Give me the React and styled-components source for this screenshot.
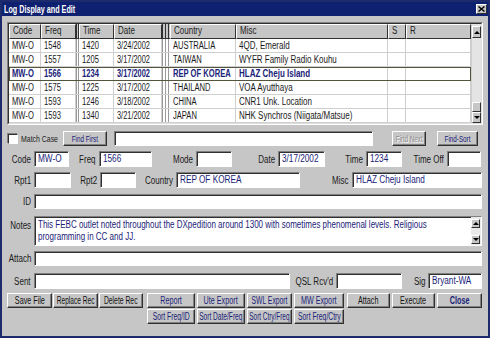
import React from "react";
import styled, { createGlobalStyle } from "styled-components";

const FONT = `"Liberation Sans", Arial, sans-serif`;
const FACE = "#c6c6c6";
const NAVY = "#1a2378";

const GlobalStyle = createGlobalStyle`
  html, body { margin: 0; padding: 0; background: ${FACE}; }
  body { font-family: ${FONT}; font-size: 10px; color: #111; }
  * { box-sizing: border-box; }
`;

const COLS = "32px 35px 3px 35px 48px 8px 66px 152px 18px 65px";

const rows = [
  ["MW-O", "1548", "1420", "3/24/2002", "AUSTRALIA", "4QD, Emerald"],
  ["MW-O", "1557", "1205", "3/17/2002", "TAIWAN", "WYFR Family Radio Kouhu"],
  ["MW-O", "1566", "1234", "3/17/2002", "REP OF KOREA", "HLAZ Cheju Island"],
  ["MW-O", "1575", "1225", "3/17/2002", "THAILAND", "VOA Ayutthaya"],
  ["MW-O", "1593", "1246", "3/18/2002", "CHINA", "CNR1 Unk. Location"],
  ["MW-O", "1593", "1340", "3/21/2002", "JAPAN", "NHK Synchros (Niigata/Matsue)"],
];

// the screenshot's type is squeezed sideways, so text is narrowed with scaleX
const Lbl = ({ w, pt, children }) => (
  <Label $w={w} $pt={pt}>
    <Txt $sx={0.8} $origin="right">{children}</Txt>
  </Label>
);

const Field = ({ children, ...props }) => (
  <Input {...props}>{children ? <Txt $sx={0.82}>{children}</Txt> : null}</Input>
);

const Btn = ({ children, sx, ...props }) => (
  <Button {...props}>
    <Txt $sx={sx || (props.$small ? 0.7 : 0.72)} $origin="center">{children}</Txt>
  </Button>
);

function App() {
  return (
    <>
      <GlobalStyle />
      <Window>
        <TitleBar>
          <Txt $sx={0.72}>Log Display and Edit</Txt>
          <CloseBox>
            <svg width="7" height="6" viewBox="0 0 7 6">
              <path d="M0.5 0.5 L6.5 5.5 M6.5 0.5 L0.5 5.5" stroke="#000" strokeWidth="1.4" />
            </svg>
          </CloseBox>
        </TitleBar>

        <Body>
          <Grid>
            <GridInner>
              <Table>
                <HeaderRow>
                  {["Code", "Freq", null, "Time", "Date", null, "Country", "Misc", "S", "R"].map((h, i) =>
                    h === null ? (
                      <Sep key={i} $head $period={i === 2 ? 2 : 3} />
                    ) : (
                      <HeadCell key={i}>
                        <Txt $sx={0.8}>{h}</Txt>
                      </HeadCell>
                    )
                  )}
                </HeaderRow>
                {rows.map((r, i) => (
                  <DataRow key={i} $selected={i === 2}>
                    <Cell><Txt $sx={0.76}>{r[0]}</Txt></Cell>
                    <Cell><Txt $sx={0.76}>{r[1]}</Txt></Cell>
                    <Sep $period={2} />
                    <Cell><Txt $sx={0.76}>{r[2]}</Txt></Cell>
                    <Cell><Txt $sx={0.74}>{r[3]}</Txt></Cell>
                    <Sep $period={3} />
                    <Cell><Txt $sx={0.76}>{r[4]}</Txt></Cell>
                    <Cell><Txt $sx={0.8}>{r[5]}</Txt></Cell>
                    <Cell />
                    <Cell />
                  </DataRow>
                ))}
              </Table>
              <ScrollBar>
                <ScrollArrow $h={12} $mt={2}><Tri $up /></ScrollArrow>
                <Thumb />
                <ScrollArrow $h={11}><Tri /></ScrollArrow>
              </ScrollBar>
            </GridInner>
          </Grid>

          <Row $mt={6}>
            <MatchCase>
              <Check />
              <SmallLabel><Txt $sx={0.77}>Match Case</Txt></SmallLabel>
            </MatchCase>
            <Btn $w={44} $h={15} $small $tone="navy">Find First</Btn>
            <Field $w={259} $h={15} $ml={7} />
            <Btn $w={34} $h={15} $ml={19} $small $tone="disabled">Find Next</Btn>
            <Btn $w={41} $h={15} $ml={11} $small $tone="navy">Find-Sort</Btn>
          </Row>

          <Row $mt={5}>
            <Lbl w={27}>Code</Lbl><Field $w={35}>MW-O</Field>
            <Lbl w={30}>Freq</Lbl><Field $w={53}>1566</Field>
            <Lbl w={44}>Mode</Lbl><Field $w={36} />
            <Lbl w={46}>Date</Lbl><Field $w={47}>3/17/2002</Field>
            <Lbl w={41}>Time</Lbl><Field $w={36}>1234</Field>
            <Lbl w={45}>Time Off</Lbl><Field $w={34} />
          </Row>

          <Row $mt={5}>
            <Lbl w={27}>Rpt1</Lbl><Field $w={37} />
            <Lbl w={29}>Rpt2</Lbl><Field $w={36} />
            <Lbl w={40}>Country</Lbl><Field $w={124}>REP OF KOREA</Field>
            <Lbl w={52}>Misc</Lbl><Field $fill>HLAZ Cheju Island</Field>
          </Row>

          <Row $mt={6}>
            <Lbl w={27}>ID</Lbl><Field $fill $h={15} />
          </Row>

          <Row $mt={7} $top>
            <Lbl w={27} pt={4}>Notes</Lbl>
            <NotesBox>
              <NotesText>
                <NotesInner>
                  This FEBC outlet noted throughout the DXpedition around 1300 with sometimes phenomenal levels. Religious programming in CC and JJ.
                </NotesInner>
              </NotesText>
              <NotesScroll>
                <MiniArrow><Tri $up /></MiniArrow>
                <MiniArrow><Tri /></MiniArrow>
              </NotesScroll>
            </NotesBox>
          </Row>

          <Row $mt={5}>
            <Lbl w={27}>Attach</Lbl><Field $fill $h={15} />
          </Row>

          <Row $mt={7}>
            <Lbl w={27}>Sent</Lbl><Field $w={256} />
            <Lbl w={46}>QSL Rcv'd</Lbl><Field $w={66} />
            <Lbl w={26}>Sig</Lbl><Field $fill>Bryant-WA</Field>
          </Row>

          <ButtonBar>
            <ButtonGroup $gap={1}>
              <Btn $w={45}>Save File</Btn>
              <Btn $w={45} sx={0.66}>Replace Rec</Btn>
              <Btn $w={44} sx={0.68}>Delete Rec</Btn>
            </ButtonGroup>
            <SortGrid>
              <Btn $tone="navy">Report</Btn>
              <Btn $tone="navy">Ute Export</Btn>
              <Btn $tone="navy" sx={0.68}>SWL Export</Btn>
              <Btn $tone="navy">MW Export</Btn>
              <Btn $tone="navy" sx={0.68}>Sort Freq/ID</Btn>
              <Btn $tone="navy" sx={0.66}>Sort Date/Freq</Btn>
              <Btn $tone="navy" sx={0.64}>Sort Ctry/Freq</Btn>
              <Btn $tone="navy" sx={0.68}>Sort Freq/Ctry</Btn>
            </SortGrid>
            <ButtonGroup $gap={2} $ml={3}>
              <Btn $w={43}>Attach</Btn>
              <Btn $w={43}>Execute</Btn>
              <Btn $w={45} $tone="navy" $bold>Close</Btn>
            </ButtonGroup>
          </ButtonBar>
        </Body>
      </Window>
    </>
  );
}

export default App;

const Txt = styled.span`
  display: inline-block;
  white-space: nowrap;
  transform: scaleX(${(p) => p.$sx || 0.78});
  transform-origin: ${(p) => p.$origin || "left"} center;
`;

const Window = styled.div`
  width: 490px;
  height: 338px;
  background: ${FACE};
  border: 2px solid #1d2a6c;
  display: flex;
  flex-direction: column;
  overflow: hidden;
`;

const TitleBar = styled.div`
  height: 14px;
  flex-shrink: 0;
  background: #0e2070;
  color: #fff;
  font-weight: bold;
  font-size: 10px;
  display: flex;
  align-items: center;
  justify-content: space-between;
  padding: 0 1px 0 2px;
`;

const CloseBox = styled.div`
  width: 11px;
  height: 10px;
  background: ${FACE};
  border: 1px solid;
  border-color: #fff #303030 #303030 #fff;
  display: flex;
  align-items: center;
  justify-content: center;
`;

const Body = styled.div`
  flex: 1;
  display: flex;
  flex-direction: column;
  padding: 6px 6px 0 5px;
`;

const Grid = styled.div`
  width: 476px;
  height: 103px;
  flex-shrink: 0;
  border: 1px solid;
  border-color: #808080 #fff #fff #808080;
`;

const GridInner = styled.div`
  height: 100%;
  display: flex;
  background: #fff;
  border: 1px solid;
  border-color: #303030 #dedede #dedede #303030;
`;

const Table = styled.div`
  flex: 1;
  display: flex;
  flex-direction: column;
`;

const HeaderRow = styled.div`
  display: grid;
  grid-template-columns: ${COLS};
  height: 15px;
  background: ${FACE};
`;

const HeadCell = styled.div`
  background: ${FACE};
  border: 1px solid;
  border-color: #fff #303030 #303030 #fff;
  padding-left: 3px;
  line-height: 12px;
  font-size: 10px;
  color: #222;
  overflow: hidden;
`;

const Sep = styled.div`
  background: repeating-linear-gradient(
    90deg,
    ${(p) => (p.$head ? "#303030" : "#9a9a9a")} 0 1px,
    ${(p) => (p.$head ? FACE : "#fff")} 1px ${(p) => p.$period}px
  );
  border-bottom: 1px solid ${(p) => (p.$head ? "#303030" : "#cfcfcf")};
`;

const DataRow = styled.div`
  display: grid;
  grid-template-columns: ${COLS};
  height: 14px;
  color: ${(p) => (p.$selected ? NAVY : "#1a1a1a")};
  font-weight: ${(p) => (p.$selected ? "bold" : "normal")};
  outline: ${(p) => (p.$selected ? "1px solid #55553e" : "none")};
  outline-offset: -1px;
`;

const Cell = styled.div`
  border-right: 1px solid #cfcfcf;
  border-bottom: 1px solid #cfcfcf;
  padding-left: 3px;
  line-height: 13px;
  font-size: 10px;
  overflow: hidden;
`;

const ScrollBar = styled.div`
  width: 10px;
  display: flex;
  flex-direction: column;
  background: #e4e4e4;
  border-left: 1px solid #cfcfcf;
`;

const ScrollArrow = styled.div`
  height: ${(p) => p.$h}px;
  flex-shrink: 0;
  margin-top: ${(p) => p.$mt || 0}px;
  background: ${FACE};
  border: 1px solid;
  border-color: #fff #303030 #303030 #fff;
  display: flex;
  align-items: center;
  justify-content: center;
`;

const Thumb = styled.div`
  height: 10px;
  margin-top: auto;
  background: ${FACE};
  border: 1px solid;
  border-color: #fff #303030 #303030 #fff;
`;

const Tri = styled.span`
  width: 0;
  height: 0;
  border-left: 3px solid transparent;
  border-right: 3px solid transparent;
  ${(p) => (p.$up ? "border-bottom: 3px solid #000;" : "border-top: 3px solid #000;")}
`;

const Row = styled.div`
  display: flex;
  align-items: ${(p) => (p.$top ? "flex-start" : "center")};
  margin-top: ${(p) => p.$mt}px;
  flex-shrink: 0;
`;

const MatchCase = styled.div`
  width: 56px;
  display: flex;
  align-items: center;
  padding-left: 1px;
`;

const Check = styled.div`
  width: 10px;
  height: 10px;
  flex-shrink: 0;
  background: #fff;
  border: 1px solid;
  border-color: #303030 #fff #fff #303030;
  box-shadow: -1px -1px 0 #808080;
`;

const SmallLabel = styled.span`
  margin-left: 3px;
  font-size: 9px;
  color: #222;
`;

const Label = styled.div`
  width: ${(p) => p.$w}px;
  flex-shrink: 0;
  display: flex;
  justify-content: flex-end;
  padding-right: 3px;
  padding-top: ${(p) => p.$pt || 0}px;
  font-size: 10px;
  color: #1a1a1a;
`;

const Input = styled.div`
  ${(p) => (p.$fill ? "flex: 1;" : `width: ${p.$w}px; flex-shrink: 0;`)}
  height: ${(p) => p.$h || 16}px;
  margin-left: ${(p) => p.$ml || 0}px;
  background: #fff;
  border: 1px solid;
  border-color: #808080 #fff #fff #808080;
  box-shadow: inset 1px 1px 0 #303030;
  padding: 0 2px 0 3px;
  line-height: 14px;
  font-size: 10px;
  color: ${NAVY};
  overflow: hidden;
`;

const NotesBox = styled.div`
  flex: 1;
  height: 30px;
  display: flex;
  background: #fff;
  border: 1px solid;
  border-color: #808080 #fff #fff #808080;
  box-shadow: inset 1px 1px 0 #303030;
`;

const NotesText = styled.div`
  flex: 1;
  padding: 2px 2px 0 3px;
  overflow: hidden;
`;

const NotesInner = styled.div`
  width: 125%;
  transform: scaleX(0.8);
  transform-origin: left top;
  font-size: 10px;
  line-height: 12px;
  color: ${NAVY};
`;

const NotesScroll = styled.div`
  width: 10px;
  display: flex;
  flex-direction: column;
  justify-content: space-between;
  padding: 2px 1px 1px 0;
  background: #eaeaea;
`;

const MiniArrow = styled.div`
  height: 9px;
  background: ${FACE};
  border: 1px solid;
  border-color: #fff #303030 #303030 #fff;
  display: flex;
  align-items: center;
  justify-content: center;
`;

const ButtonBar = styled.div`
  display: flex;
  align-items: flex-start;
  margin-top: 4px;
`;

const ButtonGroup = styled.div`
  display: flex;
  gap: ${(p) => p.$gap}px;
  margin-left: ${(p) => p.$ml || 0}px;
`;

const SortGrid = styled.div`
  margin-left: 4px;
  display: grid;
  grid-template-columns: 48px 48px 45px 50px;
  column-gap: 2px;
  row-gap: 1px;
`;

const TONES = {
  black: "#111",
  navy: NAVY,
  disabled: "#8c8c8c",
};

const Button = styled.div`
  ${(p) => (p.$w ? `width: ${p.$w}px;` : "")}
  height: ${(p) => p.$h || 15}px;
  margin-left: ${(p) => p.$ml || 0}px;
  flex-shrink: 0;
  background: ${FACE};
  border: 1px solid;
  border-color: #fff #303030 #303030 #fff;
  box-shadow: inset -1px -1px 0 #808080;
  display: flex;
  align-items: center;
  justify-content: center;
  font-size: ${(p) => (p.$small ? "9px" : "10px")};
  font-weight: ${(p) => (p.$bold ? "bold" : "normal")};
  color: ${(p) => TONES[p.$tone || "black"]};
  text-shadow: ${(p) => (p.$tone === "disabled" ? "1px 1px 0 #fff" : "none")};
`;
